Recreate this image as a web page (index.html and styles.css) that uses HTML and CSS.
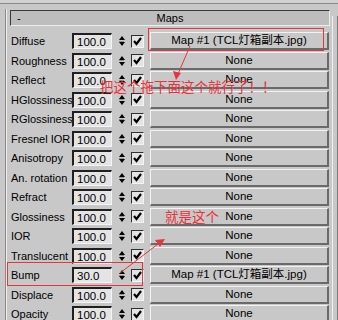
FILE: index.html
```html
<!DOCTYPE html>
<html lang="en">
<head>
  <meta charset="UTF-8" />
  <title>Maps</title>
  <link rel="stylesheet" href="styles.css">
</head>
<body>

  <div class="topline"></div>

  <div class="panel">
    <div class="rollout">
      <div class="header">
        <span class="minus">-</span>
        <span class="title">Maps</span>
      </div>

      <div class="rows">
        <div class="row"><span class="lbl">Diffuse</span><span class="num">100.0</span><span class="spin"><i class="up"></i><i class="dn"></i></span><span class="chk"><svg viewBox="0 0 11 11"><path d="M2 5 L4.5 8 L9 2" /></svg></span><span class="btn">Map #1 (TCL灯箱副本.jpg)</span></div>
        <div class="row"><span class="lbl">Roughness</span><span class="num">100.0</span><span class="spin"><i class="up"></i><i class="dn"></i></span><span class="chk"><svg viewBox="0 0 11 11"><path d="M2 5 L4.5 8 L9 2" /></svg></span><span class="btn">None</span></div>
        <div class="row"><span class="lbl">Reflect</span><span class="num">100.0</span><span class="spin"><i class="up"></i><i class="dn"></i></span><span class="chk"><svg viewBox="0 0 11 11"><path d="M2 5 L4.5 8 L9 2" /></svg></span><span class="btn">None</span></div>
        <div class="row"><span class="lbl">HGlossiness</span><span class="num">100.0</span><span class="spin"><i class="up"></i><i class="dn"></i></span><span class="chk"><svg viewBox="0 0 11 11"><path d="M2 5 L4.5 8 L9 2" /></svg></span><span class="btn">None</span></div>
        <div class="row"><span class="lbl">RGlossiness</span><span class="num">100.0</span><span class="spin"><i class="up"></i><i class="dn"></i></span><span class="chk"><svg viewBox="0 0 11 11"><path d="M2 5 L4.5 8 L9 2" /></svg></span><span class="btn">None</span></div>
        <div class="row"><span class="lbl">Fresnel IOR</span><span class="num">100.0</span><span class="spin"><i class="up"></i><i class="dn"></i></span><span class="chk"><svg viewBox="0 0 11 11"><path d="M2 5 L4.5 8 L9 2" /></svg></span><span class="btn">None</span></div>
        <div class="row"><span class="lbl">Anisotropy</span><span class="num">100.0</span><span class="spin"><i class="up"></i><i class="dn"></i></span><span class="chk"><svg viewBox="0 0 11 11"><path d="M2 5 L4.5 8 L9 2" /></svg></span><span class="btn">None</span></div>
        <div class="row"><span class="lbl">An. rotation</span><span class="num">100.0</span><span class="spin"><i class="up"></i><i class="dn"></i></span><span class="chk"><svg viewBox="0 0 11 11"><path d="M2 5 L4.5 8 L9 2" /></svg></span><span class="btn">None</span></div>
        <div class="row"><span class="lbl">Refract</span><span class="num">100.0</span><span class="spin"><i class="up"></i><i class="dn"></i></span><span class="chk"><svg viewBox="0 0 11 11"><path d="M2 5 L4.5 8 L9 2" /></svg></span><span class="btn">None</span></div>
        <div class="row"><span class="lbl">Glossiness</span><span class="num">100.0</span><span class="spin"><i class="up"></i><i class="dn"></i></span><span class="chk"><svg viewBox="0 0 11 11"><path d="M2 5 L4.5 8 L9 2" /></svg></span><span class="btn">None</span></div>
        <div class="row"><span class="lbl">IOR</span><span class="num">100.0</span><span class="spin"><i class="up"></i><i class="dn"></i></span><span class="chk"><svg viewBox="0 0 11 11"><path d="M2 5 L4.5 8 L9 2" /></svg></span><span class="btn">None</span></div>
        <div class="row"><span class="lbl">Translucent</span><span class="num">100.0</span><span class="spin"><i class="up"></i><i class="dn"></i></span><span class="chk"><svg viewBox="0 0 11 11"><path d="M2 5 L4.5 8 L9 2" /></svg></span><span class="btn">None</span></div>
        <div class="row"><span class="lbl">Bump</span><span class="num">30.0</span><span class="spin"><i class="up"></i><i class="dn"></i></span><span class="chk"><svg viewBox="0 0 11 11"><path d="M2 5 L4.5 8 L9 2" /></svg></span><span class="btn">Map #1 (TCL灯箱副本.jpg)</span></div>
        <div class="row"><span class="lbl">Displace</span><span class="num">100.0</span><span class="spin"><i class="up"></i><i class="dn"></i></span><span class="chk"><svg viewBox="0 0 11 11"><path d="M2 5 L4.5 8 L9 2" /></svg></span><span class="btn">None</span></div>
        <div class="row"><span class="lbl">Opacity</span><span class="num">100.0</span><span class="spin"><i class="up"></i><i class="dn"></i></span><span class="chk"><svg viewBox="0 0 11 11"><path d="M2 5 L4.5 8 L9 2" /></svg></span><span class="btn">None</span></div>
      </div>
    </div>
    <div class="scroll"></div>
  </div>

  <!-- red notes drawn over the screenshot -->
  <div class="mark mark-map"></div>
  <div class="mark mark-bump"></div>
  <div class="note note-drag">把这个拖下面这个就行了！！</div>
  <div class="note note-this">就是这个</div>
  <svg class="arrows" width="338" height="320" viewBox="0 0 338 320">
    <line x1="190" y1="46" x2="178" y2="74" />
    <polygon points="176,80 173,71 181,73" />
    <line x1="120" y1="273" x2="158" y2="244" />
    <polygon points="165,239 155,240 160,247" />
  </svg>

</body>
</html>
```

FILE: styles.css
```css
body {
  margin: 0;
  width: 338px;
  height: 320px;
  overflow: hidden;
  background: #c8c8c8;
  font-family: "Liberation Sans", Arial, "Noto Sans CJK SC", sans-serif;
  font-size: 11px;
  color: #000;
  position: relative;
}
.topline {
  height: 3px;
  border-bottom: 1px solid #8a8a8a;
  background: #d0d0d0;
}
.panel {
  display: flex;
  margin-top: 5px;
}
.rollout {
  margin-left: 5px;
  padding-top: 1px;
  border-left: 1px solid #8a8a8a;
  box-shadow: inset 1px 0 0 #ececec;
  width: 325px;
}
.header {
  margin-left: 4px;
  width: 318px;
  height: 14px;
  border: 1px solid #3a3a3a;
  border-right-color: #ededed;
  border-bottom-color: #ededed;
  background: #bdbdbd;
  display: flex;
  align-items: center;
  position: relative;
  font-size: 11px;
}
.minus {
  margin-left: 6px;
}
.title {
  position: absolute;
  left: 0;
  right: 0;
  text-align: center;
}
.rows {
  margin-top: 5.5px;
  padding-left: 5px;
}
.row {
  height: 19.5px;
  display: flex;
  align-items: center;
}
.lbl {
  width: 61px;
  white-space: nowrap;
}
.num {
  width: 34px;
  height: 13px;
  line-height: 14px;
  padding-left: 3px;
  background: #e4e4e4;
  border-top: 2px solid #202020;
  border-left: 2px solid #202020;
  border-right: 1px solid #f4f4f4;
  border-bottom: 1px solid #f4f4f4;
  font-size: 11.5px;
}
.spin {
  width: 9px;
  height: 15px;
  margin-left: 5px;
  display: flex;
  flex-direction: column;
  align-items: center;
  justify-content: center;
  gap: 2px;
  position: relative;
}
.spin::after {
  content: "";
  position: absolute;
  left: 2px;
  right: 2px;
  top: 7px;
  height: 1px;
  background: #909090;
}
.up, .dn {
  width: 0;
  height: 0;
  border-left: 3px solid transparent;
  border-right: 3px solid transparent;
}
.up {
  border-bottom: 4px solid #000;
}
.dn {
  border-top: 4px solid #000;
}
.chk {
  width: 11px;
  height: 11px;
  margin-left: 5px;
  background: #e4e4e4;
  border-top: 1px solid #303030;
  border-left: 1px solid #303030;
  border-right: 1px solid #f4f4f4;
  border-bottom: 1px solid #f4f4f4;
  display: flex;
}
.chk svg {
  width: 11px;
  height: 11px;
}
.chk path {
  fill: none;
  stroke: #000;
  stroke-width: 2.2;
}
.btn {
  margin-left: 6px;
  width: 176px;
  height: 15px;
  line-height: 15px;
  text-align: center;
  background: #c8c8c8;
  border-top: 1px solid #f2f2f2;
  border-left: 1px solid #f2f2f2;
  border-right: 2px solid #6a6a6a;
  border-bottom: 2px solid #6a6a6a;
  white-space: nowrap;
  font-size: 11.5px;
}
.scroll {
  width: 5px;
  margin-left: 2px;
  margin-top: 7px;
  border-left: 1px solid #f0f0f0;
  border-right: 1px solid #7a7a7a;
  height: 320px;
}
.mark {
  position: absolute;
  border: 1px solid #e0383e;
}
.mark-map {
  left: 148px;
  top: 28px;
  width: 174px;
  height: 21px;
}
.mark-bump {
  left: 7px;
  top: 262px;
  width: 134px;
  height: 22px;
}
.note {
  position: absolute;
  color: #e8323a;
  font-family: "Noto Sans CJK SC", sans-serif;
  font-size: 13.5px;
  line-height: 16px;
  white-space: nowrap;
}
.note-drag {
  left: 100px;
  top: 78px;
}
.note-this {
  left: 165px;
  top: 208px;
}
.arrows {
  position: absolute;
  left: 0;
  top: 0;
}
.arrows line {
  stroke: #e0383e;
  stroke-width: 1;
}
.arrows polygon {
  fill: #e0383e;
}
```
